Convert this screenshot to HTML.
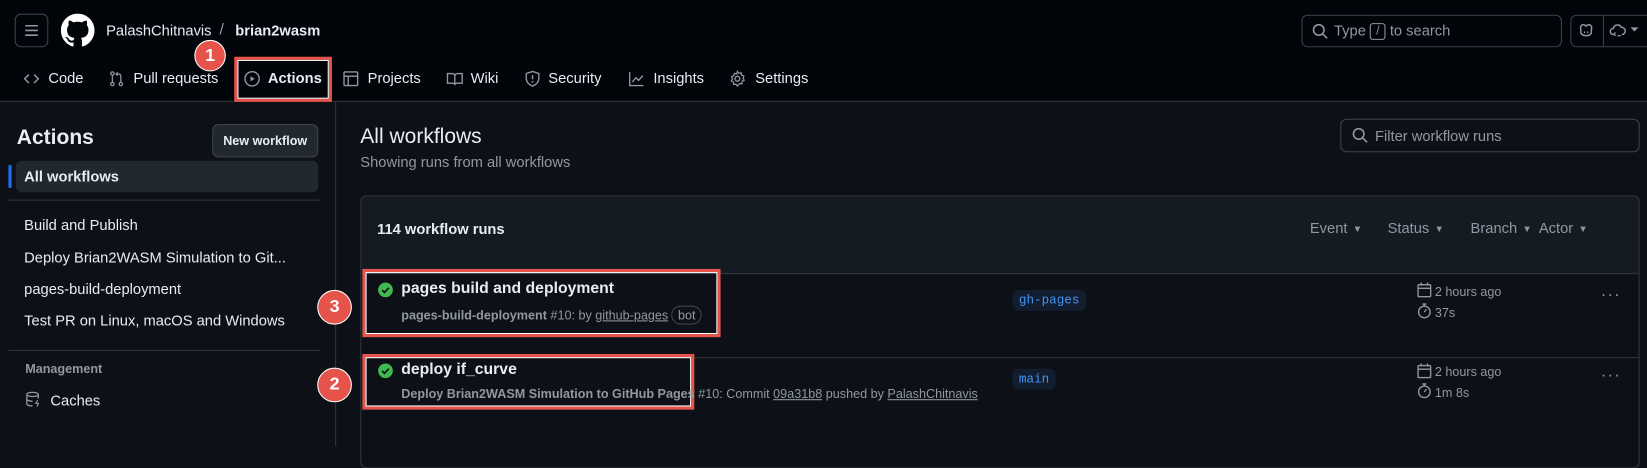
<!DOCTYPE html>
<html><head><meta charset="utf-8"><style>
*{box-sizing:border-box;margin:0;padding:0}
body{width:1647px;height:425px;overflow:hidden;background:#0d1117;font-family:"Liberation Sans",sans-serif;color:#e6edf3;position:relative}
#w{position:absolute;left:0;top:0;width:1568px;height:405px;transform:scale(1.0504);transform-origin:0 0}
.a{position:absolute;white-space:nowrap}
svg{position:absolute}
.g{color:#9198a1}
.nav{font-size:14px;top:66px;color:#e6edf3}
.red{position:absolute;border:3px solid #e5534b;outline:1px solid #fff;outline-offset:-4px}
.circ{position:absolute;border-radius:50%;background:#e5534b;border:1.5px solid #fff;color:#fff;font-size:17px;font-weight:bold;text-align:center}
.side{font-size:14px;left:23px}
.pill{position:absolute;background:#121d2f;color:#4493f8;font-family:"Liberation Mono",monospace;font-size:12px;border-radius:6px;padding:0 6px;height:20px;line-height:20px}
.car{font-size:9px;vertical-align:middle;margin-left:5px}
</style></head><body><div id="w">
<!-- header -->
<div class="a" style="left:0;top:0;width:1568px;height:97px;background:#010409;border-bottom:1px solid #30363d"></div>
<div class="a" style="left:14px;top:13px;width:32px;height:32px;border:1px solid #3d444d;border-radius:6px"></div>
<svg style="left:22px;top:21px" width="16" height="16" viewBox="0 0 16 16"><path d="M2 3.5h12M2 8h12M2 12.5h12" stroke="#9198a1" stroke-width="1.5"/></svg>
<svg style="left:58px;top:13px" width="32" height="32" viewBox="0 0 16 16"><path fill="#fff" d="M8 0C3.58 0 0 3.58 0 8c0 3.54 2.290 6.53 5.47 7.59.4.07.55-.17.55-.38 0-.19-.01-.82-.01-1.49-2.01.37-2.53-.49-2.690-.94-.09-.23-.48-.94-.82-1.13-.28-.15-.68-.52-.01-.53.63-.01 1.08.58 1.23.82.72 1.21 1.87.87 2.33.66.07-.52.28-.87.51-1.07-1.78-.2-3.64-.89-3.64-3.95 0-.87.31-1.59.82-2.15-.08-.2-.36-1.02.08-2.12 0 0 .67-.21 2.2.82.64-.18 1.32-.27 2-.27.68 0 1.36.09 2 .27 1.53-1.04 2.2-.82 2.2-.82.44 1.1.16 1.92.08 2.12.51.56.82 1.27.82 2.15 0 3.07-1.87 3.75-3.65 3.95.29.25.54.73.54 1.48 0 1.07-.01 1.93-.01 2.2 0 .21.15.46.55.38A8.013 8.013 0 0016 8c0-4.42-3.58-8-8-8z"/></svg>
<div class="a" style="left:101px;top:21px;font-size:14px">PalashChitnavis</div>
<div class="a g" style="left:209px;top:20px;font-size:15px">/</div>
<div class="a" style="left:224px;top:21px;font-size:14px;font-weight:bold">brian2wasm</div>

<div class="a" style="left:1239px;top:14px;width:248px;height:31px;border:1px solid #3d444d;border-radius:6px"></div>
<svg style="left:1249px;top:22px" width="16" height="16" viewBox="0 0 16 16"><circle cx="6.5" cy="6.5" r="5" fill="none" stroke="#9198a1" stroke-width="1.5"/><path d="M10.2 10.2L14.5 14.5" stroke="#9198a1" stroke-width="1.5"/></svg>
<div class="a g" style="left:1270px;top:21px;font-size:14px">Type <span style="display:inline-block;border:1px solid #9198a1;border-radius:3px;font-size:11px;width:15px;height:16px;text-align:center;line-height:14px;vertical-align:middle">/</span> to search</div>
<div class="a" style="left:1495px;top:14px;width:100px;height:31px;border:1px solid #3d444d;border-radius:6px"></div>
<div class="a" style="left:1526px;top:14px;width:1px;height:31px;background:#3d444d"></div>
<svg style="left:1502px;top:21px" width="16" height="16" viewBox="0 0 16 16"><path d="M3 7c-1-3 1-5 3-4.5 1 .3 1.5 1 2 1.5.5-.5 1-1.2 2-1.5 2-.5 4 1.5 3 4.5v3c0 2-3 3-5 3s-5-1-5-3z" fill="none" stroke="#9198a1" stroke-width="1.4"/><path d="M6.5 9v1.5M9.5 9v1.5" stroke="#9198a1" stroke-width="1.3"/></svg>
<svg style="left:1532px;top:21px" width="16" height="16" viewBox="0 0 16 16"><path d="M4 12a3 3 0 010-6 4 4 0 017.5-1A3 3 0 0112 12" fill="none" stroke="#9198a1" stroke-width="1.4"/><path d="M6 10l-1.5 1.5L6 13M8 13h3" stroke="#9198a1" stroke-width="1.3" fill="none"/></svg>
<svg style="left:1552px;top:26px" width="8" height="6"><path d="M0 0h8L4 4z" fill="#9198a1"/></svg>

<!-- nav -->
<svg style="left:22px;top:67px" width="16" height="16" viewBox="0 0 16 16"><path d="M5.5 4L1.5 8l4 4M10.5 4l4 4-4 4" fill="none" stroke="#9198a1" stroke-width="1.4"/></svg>
<div class="a nav" style="left:46px">Code</div>
<svg style="left:103px;top:67px" width="16" height="16" viewBox="0 0 16 16"><circle cx="4" cy="3" r="1.6" fill="none" stroke="#9198a1" stroke-width="1.2"/><circle cx="4" cy="13" r="1.6" fill="none" stroke="#9198a1" stroke-width="1.2"/><circle cx="12" cy="13" r="1.6" fill="none" stroke="#9198a1" stroke-width="1.2"/><path d="M4 4.6v6.8M12 11.4V5.5c0-1-.5-2-2-2H7.5M9 2L7.5 3.5 9 5" fill="none" stroke="#9198a1" stroke-width="1.2"/></svg>
<div class="a nav" style="left:127px">Pull requests</div>
<div class="red" style="left:223px;top:54px;width:93px;height:43px"></div>
<svg style="left:232px;top:67px" width="16" height="16" viewBox="0 0 16 16"><circle cx="8" cy="8" r="6.8" fill="none" stroke="#9198a1" stroke-width="1.3"/><path d="M6.5 5.5v5l4-2.5z" fill="#9198a1"/></svg>
<div class="a nav" style="left:255px;font-weight:bold">Actions</div>
<div class="circ" style="left:185px;top:38px;width:30px;height:30px;line-height:27px">1</div>
<svg style="left:326px;top:67px" width="16" height="16" viewBox="0 0 16 16"><rect x="1.5" y="1.5" width="13" height="13" rx="1" fill="none" stroke="#9198a1" stroke-width="1.3"/><path d="M1.5 5.5h13M5.5 5.5v9" stroke="#9198a1" stroke-width="1.3"/></svg>
<div class="a nav" style="left:350px">Projects</div>
<svg style="left:425px;top:67px" width="16" height="16" viewBox="0 0 16 16"><path d="M1 3h4.5c1.5 0 2.5 1 2.5 2.5V14c0-1-1-1.8-2-1.8H1zM15 3h-4.5C9 3 8 4 8 5.5V14c0-1 1-1.8 2-1.8h5z" fill="none" stroke="#9198a1" stroke-width="1.3"/></svg>
<div class="a nav" style="left:448px">Wiki</div>
<svg style="left:499px;top:67px" width="16" height="16" viewBox="0 0 16 16"><path d="M8 1l6 2v4.5c0 3.5-2.5 6-6 7.5-3.5-1.5-6-4-6-7.5V3z" fill="none" stroke="#9198a1" stroke-width="1.3"/><path d="M8 4.5v4" stroke="#9198a1" stroke-width="1.4"/><circle cx="8" cy="11" r=".9" fill="#9198a1"/></svg>
<div class="a nav" style="left:522px">Security</div>
<svg style="left:598px;top:67px" width="16" height="16" viewBox="0 0 16 16"><path d="M1.5 1.5v13h13" fill="none" stroke="#9198a1" stroke-width="1.3"/><path d="M4 11l3.5-4 2.5 2.5L14 5" fill="none" stroke="#9198a1" stroke-width="1.3"/></svg>
<div class="a nav" style="left:622px">Insights</div>
<svg style="left:694px;top:67px" width="16" height="16" viewBox="0 0 16 16"><circle cx="8" cy="8" r="2.3" fill="none" stroke="#9198a1" stroke-width="1.3"/><path d="M8 1l1.3 1.8 2.2-.5.6 2.2 2.1.9-.8 2.1 1.1 1.9-2 1-.2 2.3-2.3-.1L8 15l-1.3-1.8-2.3.1-.2-2.3-2-1 1.1-1.9-.8-2.1 2.1-.9.6-2.2 2.2.5z" fill="none" stroke="#9198a1" stroke-width="1.2"/></svg>
<div class="a nav" style="left:719px">Settings</div>

<!-- sidebar -->
<div class="a" style="left:319px;top:97px;width:1px;height:328px;background:#30363d"></div>
<div class="a" style="left:16px;top:120px;font-size:20px;font-weight:bold">Actions</div>
<div class="a" style="left:202px;top:118px;width:101px;height:32px;background:#212830;border:1px solid #3d444d;border-radius:6px;font-size:12px;font-weight:bold;text-align:center;line-height:30px">New workflow</div>
<div class="a" style="left:15px;top:153px;width:288px;height:30px;background:#212830;border-radius:6px"></div>
<div class="a" style="left:8px;top:157px;width:3px;height:22px;background:#1f6feb;border-radius:2px"></div>
<div class="a" style="left:23px;top:160px;font-size:14px;font-weight:bold">All workflows</div>
<div class="a" style="left:8px;top:190px;width:297px;height:1px;background:#30363d"></div>
<div class="a side" style="top:206px">Build and Publish</div>
<div class="a side" style="top:237px">Deploy Brian2WASM Simulation to Git...</div>
<div class="a side" style="top:267px">pages-build-deployment</div>
<div class="a side" style="top:297px">Test PR on Linux, macOS and Windows</div>
<div class="a" style="left:8px;top:333px;width:297px;height:1px;background:#30363d"></div>
<div class="a g" style="left:24px;top:344px;font-size:12px;font-weight:bold">Management</div>
<svg style="left:24px;top:372px" width="16" height="16" viewBox="0 0 16 16"><ellipse cx="7" cy="3.5" rx="5.5" ry="2" fill="none" stroke="#9198a1" stroke-width="1.2"/><path d="M1.5 3.5v9c0 1.1 2.5 2 5.5 2M12.5 3.5v4M1.5 8c0 1.1 2.5 2 5.5 2" fill="none" stroke="#9198a1" stroke-width="1.2"/><path d="M12 9l-2 3h2.5l-1 3" fill="none" stroke="#9198a1" stroke-width="1.1"/></svg>
<div class="a" style="left:48px;top:373px;font-size:14px">Caches</div>

<!-- main -->
<div class="a" style="left:343px;top:119px;font-size:20px">All workflows</div>
<div class="a g" style="left:343px;top:146px;font-size:14px">Showing runs from all workflows</div>
<div class="a" style="left:1276px;top:113px;width:285px;height:32px;border:1px solid #3d444d;border-radius:6px"></div>
<svg style="left:1287px;top:121px" width="16" height="16" viewBox="0 0 16 16"><circle cx="6.5" cy="6.5" r="5" fill="none" stroke="#9198a1" stroke-width="1.5"/><path d="M10.2 10.2L14.5 14.5" stroke="#9198a1" stroke-width="1.5"/></svg>
<div class="a g" style="left:1309px;top:121px;font-size:14px">Filter workflow runs</div>

<div class="a" style="left:343px;top:186px;width:1218px;height:260px;border:1px solid #30363d;border-radius:6px;overflow:hidden">
  <div style="position:absolute;left:0;top:0;width:100%;height:74px;background:#151b23;border-bottom:1px solid #30363d"></div>
  <div style="position:absolute;left:0;top:153px;width:100%;height:1px;background:#30363d"></div>
</div>
<div class="a" style="left:359px;top:210px;font-size:14px;font-weight:bold">114 workflow runs</div>
<div class="a g" style="left:1247px;top:209px;font-size:14px">Event<span class="car">▼</span></div>
<div class="a g" style="left:1321px;top:209px;font-size:14px">Status<span class="car">▼</span></div>
<div class="a g" style="left:1400px;top:209px;font-size:14px">Branch<span class="car">▼</span></div>
<div class="a g" style="left:1465px;top:209px;font-size:14px">Actor<span class="car">▼</span></div>

<!-- row 1 -->
<div class="red" style="left:345px;top:256px;width:341px;height:65px"></div>
<svg style="left:359px;top:268px" width="16" height="16" viewBox="0 0 16 16"><circle cx="8" cy="8" r="7" fill="#3fb950"/><path d="M4.8 8.2l2.2 2.2 4.2-4.4" fill="none" stroke="#0d1117" stroke-width="1.6"/></svg>
<div class="a" style="left:382px;top:266px;font-size:15px;font-weight:bold">pages build and deployment</div>
<div class="a g" style="left:382px;top:293px;font-size:12px"><b>pages-build-deployment</b> #10: by <span style="text-decoration:underline">github-pages</span> <span style="border:1px solid #3d444d;border-radius:10px;padding:1px 5px">bot</span></div>
<div class="circ" style="left:302px;top:276px;width:33px;height:33px;line-height:30px">3</div>
<div class="pill" style="left:964px;top:276px">gh-pages</div>
<svg style="left:1348px;top:268px" width="16" height="16" viewBox="0 0 16 16"><rect x="2" y="3" width="12" height="11.5" rx="1" fill="none" stroke="#9198a1" stroke-width="1.3"/><path d="M2 6.5h12M5 1v3M11 1v3" stroke="#9198a1" stroke-width="1.3"/></svg>
<div class="a g" style="left:1366px;top:271px;font-size:12px">2 hours ago</div>
<svg style="left:1348px;top:288px" width="16" height="16" viewBox="0 0 16 16"><circle cx="8" cy="9" r="5.5" fill="none" stroke="#9198a1" stroke-width="1.3"/><path d="M6 1.5h4M8 1.5v2M8 9l2-2.5" stroke="#9198a1" stroke-width="1.3"/></svg>
<div class="a g" style="left:1366px;top:291px;font-size:12px">37s</div>
<div class="a g" style="left:1524px;top:272px;font-size:16px;letter-spacing:1px">···</div>

<!-- row 2 -->
<div class="red" style="left:345px;top:337px;width:316px;height:53px"></div>
<svg style="left:359px;top:345px" width="16" height="16" viewBox="0 0 16 16"><circle cx="8" cy="8" r="7" fill="#3fb950"/><path d="M4.8 8.2l2.2 2.2 4.2-4.4" fill="none" stroke="#0d1117" stroke-width="1.6"/></svg>
<div class="a" style="left:382px;top:343px;font-size:15px;font-weight:bold">deploy if_curve</div>
<div class="a g" style="left:382px;top:368px;font-size:12px"><b>Deploy Brian2WASM Simulation to GitHub Pages</b> #10: Commit <span style="text-decoration:underline">09a31b8</span> pushed by <span style="text-decoration:underline">PalashChitnavis</span></div>
<div class="circ" style="left:302px;top:350px;width:33px;height:33px;line-height:30px">2</div>
<div class="pill" style="left:964px;top:351px">main</div>
<svg style="left:1348px;top:345px" width="16" height="16" viewBox="0 0 16 16"><rect x="2" y="3" width="12" height="11.5" rx="1" fill="none" stroke="#9198a1" stroke-width="1.3"/><path d="M2 6.5h12M5 1v3M11 1v3" stroke="#9198a1" stroke-width="1.3"/></svg>
<div class="a g" style="left:1366px;top:347px;font-size:12px">2 hours ago</div>
<svg style="left:1348px;top:364px" width="16" height="16" viewBox="0 0 16 16"><circle cx="8" cy="9" r="5.5" fill="none" stroke="#9198a1" stroke-width="1.3"/><path d="M6 1.5h4M8 1.5v2M8 9l2-2.5" stroke="#9198a1" stroke-width="1.3"/></svg>
<div class="a g" style="left:1366px;top:367px;font-size:12px">1m 8s</div>
<div class="a g" style="left:1524px;top:349px;font-size:16px;letter-spacing:1px">···</div>
</div></body></html>
